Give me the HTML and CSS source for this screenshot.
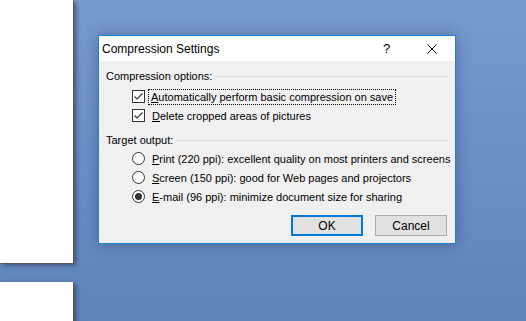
FILE: index.html
```html
<!DOCTYPE html>
<html lang="en">
<head>
<meta charset="UTF-8" />
<title>Compression Settings</title>
<link rel="stylesheet" href="styles.css">
</head>
<body>
<div class="desk">
  <div class="sheet sheet-top"></div>
  <div class="sheet sheet-next"></div>
</div>

<div class="dialog">
  <div class="titlebar">
    <span class="title">Compression Settings</span>
    <span class="tb-btn help">?</span>
    <span class="tb-btn close">
      <svg width="10" height="10" viewBox="0 0 10 10"><path d="M0.5 0.5 L9.5 9.5 M9.5 0.5 L0.5 9.5" stroke="#000" stroke-width="1" fill="none"/></svg>
    </span>
  </div>

  <div class="body">
    <div class="group-head first"><span>Compression options:</span><i class="rule"></i></div>
    <div class="opt">
      <span class="check"><svg width="11" height="11" viewBox="0 0 11 11"><path d="M1.5 5.5 L4 8 L9.5 2.5" stroke="#333" stroke-width="1.2" fill="none"/></svg></span>
      <span class="label focus"><u>A</u>utomatically perform basic compression on save</span>
    </div>
    <div class="opt">
      <span class="check"><svg width="11" height="11" viewBox="0 0 11 11"><path d="M1.5 5.5 L4 8 L9.5 2.5" stroke="#333" stroke-width="1.2" fill="none"/></svg></span>
      <span class="label"><u>D</u>elete cropped areas of pictures</span>
    </div>

    <div class="group-head second"><span>Target output:</span><i class="rule"></i></div>
    <div class="opt">
      <span class="radio"></span>
      <span class="label"><u>P</u>rint (220 ppi): excellent quality on most printers and screens</span>
    </div>
    <div class="opt">
      <span class="radio"></span>
      <span class="label"><u>S</u>creen (150 ppi): good for Web pages and projectors</span>
    </div>
    <div class="opt">
      <span class="radio on"></span>
      <span class="label"><u>E</u>-mail (96 ppi): minimize document size for sharing</span>
    </div>

    <div class="buttons">
      <button class="btn default">OK</button>
      <button class="btn">Cancel</button>
    </div>
  </div>
</div>
</body>
</html>
```

FILE: styles.css
```css
body { margin:0; width:526px; height:321px; overflow:hidden; font-family:"Liberation Sans", Arial, sans-serif; font-size:11px; color:#000;
  background:linear-gradient(180deg, #789bcf 0%, #6a8ec5 55%, #5f84bc 100%); position:relative; }

.desk { display:flex; flex-direction:column; gap:19px; width:73px; height:321px; overflow:hidden; padding-right:8px; }
.sheet { flex:none; width:73px; background:#fff; box-shadow:1px 1px 0 #555, 3px 2px 5px rgba(20,30,50,0.55); }
.sheet-top { height:263px; }
.sheet-next { height:60px; }

.dialog { position:absolute; left:98px; top:35px; width:356px; height:207px; border:1px solid #1883d7; background:#f0f0f0;
  box-shadow:0 0 14px rgba(20,30,60,0.35); display:flex; flex-direction:column; }

.titlebar { height:25px; background:#fff; display:flex; align-items:center; font-size:12px; }
.title { flex:1; padding-left:3px; }
.tb-btn { width:45px; height:25px; display:flex; align-items:center; justify-content:center; }
.help { font-size:13px; padding-bottom:1px; }
.close { width:46px; }

.body { padding:7px 8px 0 7px; display:flex; flex-direction:column; }
.group-head { height:16px; display:flex; align-items:center; gap:3px; }
.group-head.first { margin-bottom:3px; }
.group-head.second { margin-top:7px; margin-bottom:1px; }
.rule { flex:1; height:1px; background:#dcdcdc; margin-right:-1px; }

.opt { height:19px; display:flex; align-items:center; padding-left:26px; }
.check { flex:none; width:11px; height:11px; border:1px solid #333; background:#fff; display:flex; }
.radio { flex:none; width:11px; height:11px; border:1px solid #333; border-radius:50%; background:#fff; display:flex; align-items:center; justify-content:center; }
.radio.on::after { content:""; width:7px; height:7px; border-radius:50%; background:#333; }
.label { margin-left:6px; padding:0 1px; white-space:nowrap; }
.label.focus { outline:1px dotted #000; outline-offset:0; margin-left:4px; padding:1px 2px; }

.buttons { display:flex; justify-content:flex-end; gap:12px; margin-top:9px; }
.btn { width:72px; height:21px; font-family:inherit; font-size:12px; color:#000; background:#e1e1e1; border:1px solid #adadad; padding:0; }
.btn.default { border:2px solid #0078d7; }
```
